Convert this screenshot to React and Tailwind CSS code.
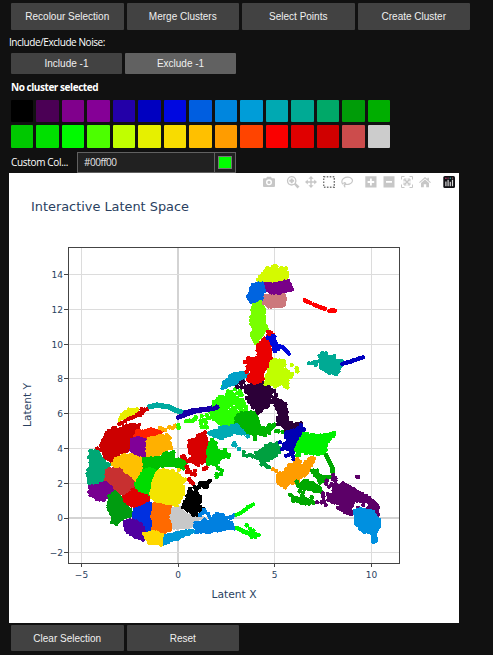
import React from 'react';

const swatches = [
  ['#000000', '#4b0055', '#80008c', '#850096', '#2300a8', '#0000c0', '#0008e0', '#005ee0', '#0086de', '#009dd8', '#00a9b2', '#00aa94', '#00a868', '#009c08', '#00ae00'],
  ['#00c800', '#00e000', '#00fa00', '#4cff00', '#c0ff00', '#e6f000', '#f8dc00', '#ffc000', '#ff9c00', '#ff4400', '#fa0000', '#e00000', '#d00000', '#cc4c4c', '#cccccc'],
];

// Each layer has its own origin; coordinates are in thirds of a pixel.
// kinds: s = solid region, c = loose cloud, l = streak, d = single points
const layers = [
  {
    origin: 'translate(60 390) scale(.33333)',
    marks: [
      ['s', '#e8ee00', '180,88 183,75 205,60 234,57 232,64 212,74 195,86'],
      ['d', '#d20000', '178,102 186,98 195,94 204,88 213,84 222,80 230,76 240,75 238,70 247,68 245,58 254,59 262,57'],
      ['l', '#00aaa0', '270,50 290,45 305,48 325,50 345,60 368,68', 16],
      ['d', '#2aff00', '378,94 388,92 398,92 404,88 407,82 422,92 423,100 435,90 437,98 425,78 440,75 428,110 440,112'],
      ['l', '#1800a8', '355,82 375,75 400,65 430,60 475,48', 14],
      ['s', '#cc0000', '132,195 125,165 140,126 165,115 175,122 200,106 238,106 228,125 220,140 210,152 205,182 180,188 165,203 150,212 135,205'],
      ['d', '#cc0000', '112,176 120,180 160,115'],
      ['s', '#ff2000', '230,122 250,125 275,116 288,122 307,123 300,135 260,145 226,140'],
      ['s', '#800098', '214,152 235,142 256,152 262,175 255,200 232,195 213,180'],
      ['s', '#ffb000', '264,147 300,137 325,138 331,172 310,187 290,197 262,198'],
      ['d', '#ffb000', '300,114 308,118 316,120 328,112 338,114 346,107 352,110 320,135'],
      ['s', '#00c000', '240,207 300,202 322,190 340,187 338,205 325,225 300,228 290,235 262,230 240,225'],
      ['s', '#00c000', '320,210 345,208 368,209 378,215 370,235 350,228 325,222'],
      ['d', '#2aff00', '355,105 356,113'],
      ['s', '#ffc000', '157,222 175,202 210,194 240,207 243,240 238,265 228,275 205,262 175,240'],
      ['s', '#00a875', '92,180 102,185 118,190 126,210 145,224 148,237 135,245 138,268 120,276 87,280 83,250 92,230 90,200'],
      ['s', '#c83030', '140,245 150,237 175,240 205,262 223,280 213,300 190,310 165,300 140,270'],
      ['s', '#780090', '89,290 140,280 158,300 146,315 131,332 110,326 91,315'],
      ['s', '#009c10', '165,305 185,325 211,360 213,375 180,390 167,401 156,398 157,375 144,355 150,320'],
      ['s', '#e00000', '190,322 225,297 268,317 260,335 225,350 207,343'],
      ['s', '#00dc00', '251,242 268,235 281,239 280,258 268,310 237,300 230,280'],
      ['s', '#f4e400', '290,247 320,240 350,250 362,262 375,270 362,285 372,300 365,322 350,340 325,343 290,336 274,320 277,280'],
      ['d', '#f4e400', '356,240 350,349'],
      ['s', '#0030e0', '222,362 268,338 282,347 278,380 276,418 262,422 245,400 222,383'],
      ['s', '#5000a0', '192,396 218,389 243,402 256,430 249,447 225,440 197,420'],
      ['s', '#ff6a00', '285,341 333,352 333,388 336,413 315,427 280,423 278,380'],
      ['s', '#0098d8', '310,437 345,432 370,424 400,422 370,438 345,448 308,462'],
      ['s', '#ffd800', '254,432 280,424 306,434 300,462 265,457'],
      ['s', '#c8c8c8', '340,357 360,353 380,375 410,383 403,403 385,413 342,411 335,385'],
      ['d', '#c8c8c8', '418,384 426,383 430,388 410,392'],
      ['s', '#000000', '370,353 380,330 388,310 407,304 419,322 419,336 405,368 385,363'],
      ['d', '#000000', '390,297 388,305 404,292 410,295 418,290 428,280 434,282 440,290 450,272 445,277 400,375 412,374 423,363 428,358 433,360'],
      ['s', '#d80000', '388,150 405,150 414,140 432,142 440,155 438,175 440,200 434,213 415,222 385,213 400,200 388,180'],
      ['d', '#d80000', '367,200 375,205 372,199 380,230 383,237 380,246 390,246 395,251 405,254 405,242 388,268 392,275 398,280 432,237 438,235 430,133 435,127'],
    ],
  },
  {
    origin: 'translate(200 360) scale(.33333)',
    marks: [
      ['c', '#2aff00', '25,150 45,120 80,95 105,85 125,95 130,125 148,150 135,165 105,180 85,200 55,190 35,175 20,180', 190],
      ['s', '#2aff00', '35,160 70,145 103,165 105,180 85,195 58,190'],
      ['s', '#2aff00', '75,115 98,105 130,125 118,133 85,127'],
      ['d', '#2aff00', '3,182 12,180 20,166 5,200 15,201 70,80 105,88 60,120'],
      ['l', '#1800a8', '-45,158 -15,150 10,149 38,147 52,142', 14],
      ['s', '#00b400', '108,175 125,160 145,157 170,160 173,195 193,207 220,194 222,200 205,217 178,222 148,222 132,205 108,195'],
      ['d', '#00b400', '165,237 165,230 207,196 228,214 235,214 248,216 195,225'],
      ['c', '#00aab4', '22,215 45,208 75,197 110,195 130,210 148,225 100,220 75,235 35,232', 100],
      ['s', '#00aab4', '43,214 75,208 105,207 93,222 75,228 45,230'],
      ['d', '#00aab4', '103,250 106,256 117,267 143,229 100,255'],
      ['s', '#d80000', '-8,225 10,220 20,240 20,270 20,300 5,300 -8,290'],
      ['s', '#00d200', '25,262 35,242 45,252 50,275 65,278 78,285 60,297 50,315 38,310 25,313'],
      ['d', '#00d200', '70,275 79,282 88,285 85,291 68,290 55,325 65,332 63,342 50,350 50,343 75,270'],
      ['d', '#d80000', '15,325 19,323'],
      ['d', '#000000', '0,370 8,376 15,382 13,370 22,368 30,362 0,410 -3,427 0,440 12,448'],
      ['c', '#0080e0', '-20,490 0,478 18,478 20,460 60,462 98,465 95,505 70,506 45,518 -10,520', 125],
      ['s', '#0080e0', '-15,498 20,502 45,472 60,467 70,485 87,490 75,505 45,512 -10,516'],
      ['d', '#0080e0', '0,465 8,458 12,450 15,456 102,466 95,472 103,505'],
      ['l', '#00fa00', '109,465 130,453 145,442 160,433', 11],
      ['l', '#00fa00', '111,504 130,514 155,523 175,525', 14],
      ['d', '#00fa00', '140,496 150,506 160,512 155,530 166,530'],
      ['s', '#00a0c8', '66,82 80,61 105,40 138,36 135,47 118,67 80,80'],
      ['s', '#2c0038', '135,80 190,68 207,80 212,105 208,130 190,145 177,157 162,140 140,115 152,103 138,95'],
      ['s', '#2c0038', '220,112 240,122 258,137 260,165 262,188 288,197 294,193 268,207 255,206 245,195 233,191 238,165 231,145 221,125'],
      ['d', '#2c0038', '112,80 122,70 130,65 125,82 195,68 215,90 223,93 228,105 303,190 258,213'],
      ['s', '#ea0000', '143,-5 215,-5 195,20 185,45 190,58 165,70 155,65 142,60 155,35 145,12'],
      ['d', '#ea0000', '135,5 143,20 140,35'],
      ['s', '#c0ff00', '208,5 245,0 248,25 270,42 262,60 260,80 245,72 225,78 207,70 195,70 205,40'],
      ['d', '#c0ff00', '275,15 290,25 292,34 272,50 276,42 262,82'],
      ['s', '#00a040', '170,280 190,270 200,255 230,252 238,265 235,278 205,300 185,303 174,290'],
      ['d', '#00a040', '131,276 132,286 141,287 150,285 158,289 165,290 172,294 185,313 194,312 200,319 207,322 232,250'],
      ['s', '#0000b4', '260,215 290,210 301,197 311,207 308,224 292,240 288,265 278,285 270,270 250,265 250,252 270,248 258,232'],
      ['d', '#0000b4', '240,247 246,268 258,287 266,285 281,298 279,290 302,195'],
      ['s', '#00f000', '288,270 308,228 330,225 370,227 385,225 403,218 404,225 382,243 376,256 374,280 340,282 310,276'],
      ['d', '#00f000', '291,286 297,285 312,221 322,222'],
      ['s', '#ff9c00', '232,345 255,335 268,315 295,310 305,318 335,293 340,298 322,340 297,356 290,370 268,368 253,380 236,370'],
      ['d', '#ff9c00', '219,328 229,333 292,298 299,305'],
      ['l', '#00a800', '378,285 388,305 397,322 398,338', 13],
      ['s', '#00a800', '334,330 350,332 360,350 395,350 380,358 363,368 350,352'],
      ['s', '#00a800', '292,378 315,362 340,370 360,385 370,400 340,390 308,385'],
      ['s', '#00a800', '275,410 300,415 325,417 325,430 300,426 280,420'],
      ['d', '#00a800', '270,404 299,394 308,399 307,407 335,412 332,422 340,428 290,365'],
      ['s', '#5c0068', '402,375 420,378 428,368 465,389 505,412 532,435 533,462 515,445 502,420 490,425 465,420 450,447 425,440 420,425 395,427 385,405 398,402'],
      ['s', '#5c0068', '415,445 435,445 465,460 440,460'],
      ['d', '#5c0068', '400,345 406,355 398,357 406,362 380,362 378,371 387,380 395,373 369,400 370,410 365,427 371,424 377,435 351,427 385,420 471,350 474,351 490,435 505,445 520,465 474,444'],
      ['s', '#0090e0', '465,450 485,448 510,452 525,464 527,472 537,477 537,500 528,518 528,545 521,546 514,518 488,511 468,490'],
    ],
  },
  {
    origin: 'translate(200 240) scale(.33333)',
    marks: [
      ['s', '#d4fa00', '176,120 187,100 207,87 257,87 262,108 260,121 200,122'],
      ['d', '#d4fa00', '219,80 224,78 229,80 202,85 245,84'],
      ['s', '#cc787c', '190,170 253,165 254,195 245,200 220,196 205,199 190,186'],
      ['s', '#780088', '196,134 237,130 264,124 273,151 240,158 215,158 197,150'],
      ['s', '#0064e0', '160,134 188,129 190,155 183,181 154,184 145,168'],
      ['s', '#78ff00', '161,192 180,192 194,208 190,228 197,263 188,286 173,300 165,311 159,295 160,270 154,240'],
      ['d', '#78ff00', '155,285 200,268 181,186'],
      ['s', '#ea0000', '172,318 195,294 208,310 209,335 205,365 198,385 150,385 152,369 178,352'],
      ['d', '#ea0000', '204,275 212,278 218,284 205,287 135,366 142,367 192,298'],
      ['s', '#0008dc', '207,292 222,292 229,310 232,328 222,335 218,312'],
      ['l', '#0008dc', '230,318 247,322 258,332 266,341', 13],
      ['d', '#0008dc', '203,293 218,288'],
      ['d', '#c0ff00', '218,370 224,370 252,364 253,374 242,376'],
      ['l', '#ff0000', '315,182 330,188', 13],
      ['l', '#ff0000', '341,194 354,199 374,206', 13],
      ['l', '#ff0000', '389,212 405,212', 13],
      ['s', '#00aa94', '360,345 375,340 382,348 380,365 395,355 405,362 426,360 433,370 422,380 410,400 380,396 362,384'],
      ['d', '#00aa94', '327,370 337,369 345,366 347,374 357,364 403,348 367,339 378,340 390,350'],
      ['l', '#0000c0', '427,372 450,365 470,358 490,352', 12],
    ],
  },
];

const makeRandom = (seed) => () => {
  seed = (seed * 1664525 + 1013904223) % 4294967296;
  return seed / 4294967296;
};

function inside(x, y, pts) {
  let hit = false;
  for (let i = 0, j = pts.length - 1; i < pts.length; j = i++) {
    const [xi, yi] = pts[i];
    const [xj, yj] = pts[j];
    if (yi > y !== yj > y && x < ((xj - xi) * (y - yi)) / (yj - yi) + xi) hit = !hit;
  }
  return hit;
}

function alongPath(pts, closed, step, jitter, rnd) {
  const out = [];
  const n = closed ? pts.length : pts.length - 1;
  for (let i = 0; i < n; i++) {
    const [x1, y1] = pts[i];
    const [x2, y2] = pts[(i + 1) % pts.length];
    const k = Math.max(1, Math.round(Math.hypot(x2 - x1, y2 - y1) / step));
    for (let t = 0; t < k; t++) {
      out.push([
        x1 + ((x2 - x1) * t) / k + (rnd() - 0.5) * jitter,
        y1 + ((y2 - y1) * t) / k + (rnd() - 0.5) * jitter,
      ]);
    }
  }
  return out;
}

function Cluster({ mark, seed }) {
  const [kind, color, coords, amount] = mark;
  const pts = coords.split(' ').map((p) => p.split(',').map(Number));
  const rnd = makeRandom(seed * 7919 + 13);
  let dots = pts;
  let r = 6.9;
  if (kind === 's') {
    dots = alongPath(pts, true, 9, 6, rnd);
    r = 6.2;
  } else if (kind === 'l') {
    dots = alongPath(pts, false, 7, 3, rnd);
    r = 6.2;
  } else if (kind === 'c') {
    const xs = pts.map((p) => p[0]);
    const ys = pts.map((p) => p[1]);
    const x0 = Math.min(...xs), x1 = Math.max(...xs), y0 = Math.min(...ys), y1 = Math.max(...ys);
    dots = [];
    while (dots.length < amount) {
      const x = x0 + rnd() * (x1 - x0);
      const y = y0 + rnd() * (y1 - y0);
      if (inside(x, y, pts)) dots.push([x, y]);
    }
    r = 6.2;
  }
  return (
    <g fill={color}>
      {kind === 's' && <polygon points={coords} stroke={color} strokeWidth="8" strokeLinejoin="round" />}
      {kind === 'l' && <polyline points={coords} fill="none" stroke={color} strokeWidth={amount} strokeLinecap="round" strokeLinejoin="round" />}
      {dots.map(([x, y], i) => <circle key={i} cx={x} cy={y} r={r} />)}
    </g>
  );
}

const xTicks = [['−5', 81.5], ['0', 178], ['5', 274.5], ['10', 371.5]];
const yTicks = [['14', 274.5], ['12', 309.5], ['10', 344.5], ['8', 378.5], ['6', 413.5], ['4', 448.5], ['2', 483.5], ['0', 518], ['−2', 552.5]];

function ModeBar() {
  return (
    <g fill="#c7c7c7" stroke="none">
      <path fillRule="evenodd" d="M263 179.3q0-1 1-1h2.2l.8-1.5h4l.8 1.5h2.2q1 0 1 1v6.7q0 1-1 1h-10q-1 0-1-1zM269 179.3a3 3 0 1 0 0 6 3 3 0 0 0 0-6zm0 1.4a1.6 1.6 0 1 1 0 3.2 1.6 1.6 0 0 1 0-3.2z" />
      <path fillRule="evenodd" d="M291.7 176a4.8 4.8 0 1 0 2.6 8.8l3.2 3.6 2-2-3.6-3.2a4.8 4.8 0 0 0-4.2-7.2zm0 1.3a3.5 3.5 0 1 1 0 7 3.5 3.5 0 0 1 0-7zm-1 1.1v1.4h-1.4v2h1.4v1.4h2v-1.4h1.4v-2h-1.4v-1.4z" />
      <path d="M311 176l2.6 2.8h-1.9v2.5h2.5v-1.9l2.8 2.6-2.8 2.6v-1.9h-2.5v2.5h1.9L311 188l-2.6-2.8h1.9v-2.5h-2.5v1.9L305 182l2.8-2.6v1.9h2.5v-2.5h-1.9z" />
      <rect x="323.7" y="176.7" width="10.6" height="10.6" fill="none" stroke="#777" strokeWidth="1.4" strokeDasharray="1.6 1.4" />
      <path d="M343 184.3c-2-2-1.3-4.6.8-6 2.4-1.7 6-1.5 7.8.3 2 2 .5 4.6-2.3 5.5-2 .6-3.8.5-5-.2-.9-.6-.2-1.5.8-1.2 1.4.5.5 2.4-.6 2.4-1 .3.4 1.1.5 2.3" fill="none" stroke="#c7c7c7" strokeWidth="1.2" />
      <path fillRule="evenodd" d="M365.3 176.3h11.2v11.2h-11.2zM370 178.6v2.4h-2.4v2h2.4v2.4h1.8V183h2.4v-2h-2.4v-2.4z" />
      <path fillRule="evenodd" d="M383.5 176.3h11v11.2h-11zM386 181v1.8h6V181z" />
      <g fill="none" stroke="#c7c7c7" strokeWidth="1">
        <path d="M401.5 179.5v-3h3M409.5 176.5h3v3M412.5 184.5v3h-3M404.5 187.5h-3v-3" />
        <path d="M404.5 179.5l5 5M409.5 179.5l-5 5" strokeWidth="1.5" />
        <path d="M404 181.5V179h2.5M407.5 179h2.5v2.5M410 182.5v2.5h-2.5M406.5 185H404v-2.5" />
      </g>
      <path d="M425 177l2.4 2.1v-1.4h1.5v2.8l2 1.7-.7.7-5.2-4.5-5.2 4.5-.7-.7zM425 179.5l4 3.5v4.2h-2.8v-2.9h-2.4v2.9H421V183z" />
      <rect x="443.3" y="176" width="11.7" height="12" rx="1.5" fill="#101014" />
      <g fill="#d8d8d8">
        <rect x="445.3" y="181.5" width="1.2" height="4.7" />
        <rect x="447.5" y="179.8" width="1.2" height="6.4" />
        <rect x="449.7" y="181.8" width="1.2" height="4.4" />
        <rect x="451.9" y="179.8" width="1.2" height="6.4" />
        <circle cx="445.9" cy="178.3" r=".8" fill="#e0487a" />
        <circle cx="448.1" cy="178.1" r=".7" fill="#c0507a" />
        <circle cx="450.3" cy="178.3" r=".8" fill="#39a9a9" />
        <circle cx="452.5" cy="178.1" r=".7" fill="#a77" />
      </g>
    </g>
  );
}

function LatentPlot() {
  return (
    <svg viewBox="9 173 450 450" className="ml-[9px] block h-[450px] w-[450px] bg-white font-['DejaVu_Sans',Verdana,sans-serif]" fill="#2a3f5f">
      <text x="31" y="211" fontSize="13" textLength="158" lengthAdjust="spacingAndGlyphs">Interactive Latent Space</text>
      <ModeBar />
      <g shapeRendering="crispEdges">
        {xTicks.map(([t, x]) => (
          <path key={t} d={`M${x} 248V563`} stroke={t === '0' ? '#d3d3d3' : '#dcdcdc'} strokeWidth={t === '0' ? 2 : 1} />
        ))}
        {yTicks.map(([t, y]) => (
          <path key={t} d={`M69 ${y}H399`} stroke={t === '0' ? '#d3d3d3' : '#dcdcdc'} strokeWidth={t === '0' ? 2 : 1} />
        ))}
        {xTicks.map(([t, x]) => <path key={t} d={`M${Math.floor(x) + 0.5} 564v3`} stroke="#444" />)}
        {yTicks.map(([t, y]) => <path key={t} d={`M64 ${Math.floor(y) + 0.5}h4`} stroke="#444" />)}
      </g>
      {layers.map((layer, i) => (
        <g key={i} transform={layer.origin} shapeRendering="crispEdges">
          {layer.marks.map((m, j) => <Cluster key={j} mark={m} seed={i * 100 + j + 1} />)}
        </g>
      ))}
      <rect x="68.5" y="247.5" width="331" height="316" fill="none" stroke="#444" shapeRendering="crispEdges" />
      <g fontSize="9">
        {xTicks.map(([t, x]) => <text key={t} x={x} y="578" textAnchor="middle">{t}</text>)}
        {yTicks.map(([t, y]) => <text key={t} x="63" y={y + 3.3} textAnchor="end">{t}</text>)}
      </g>
      <text x="211.5" y="598" fontSize="10.5" textLength="45" lengthAdjust="spacingAndGlyphs">Latent X</text>
      <text transform="translate(31 427) rotate(-90)" fontSize="10.5" textLength="44" lengthAdjust="spacingAndGlyphs">Latent Y</text>
    </svg>
  );
}

function Button({ children, className = 'bg-[#424242]' }) {
  return (
    <button className={`rounded-[1px] text-center font-['Liberation_Sans',Arial,sans-serif] text-[10px] text-[#f0f0f0] ${className}`}>
      {children}
    </button>
  );
}

export default function App() {
  return (
    <main className="h-[655px] w-[493px] overflow-hidden bg-[#111111] pt-[3px] font-['Open_Sans','Noto_Sans',sans-serif] text-[10px] text-white">
      <div className="ml-[11px] grid h-[27px] w-[459px] grid-cols-4 gap-[3px]">
        <Button>Recolour Selection</Button>
        <Button>Merge Clusters</Button>
        <Button>Select Points</Button>
        <Button>Create Cluster</Button>
      </div>
      <div className="ml-[9px] flex h-[23px] items-center pt-[2px]">
        <span className="whitespace-nowrap tracking-[-0.43px]">Include/Exclude Noise:</span>
      </div>
      <div className="ml-[11px] grid h-[21px] w-[225px] grid-cols-2 gap-[3px]">
        <Button>Include -1</Button>
        <Button className="bg-[#616161]">Exclude -1</Button>
      </div>
      <div className="ml-[11px] flex h-[26px] items-center font-bold tracking-[-0.45px]">No cluster selected</div>
      <div className="ml-[11px] grid h-[48px] w-[379px] grid-rows-[22px_23px] gap-[3px]">
        {swatches.map((row, i) => (
          <div key={i} className="grid grid-cols-[repeat(15,minmax(0,1fr))] gap-[3px]">
            {row.map((c) => <div key={c} className="rounded-[1px]" style={{ backgroundColor: c }} />)}
          </div>
        ))}
      </div>
      <div className="ml-[11px] mt-[4px] flex h-[21px] items-center">
        <span className="w-[66px] tracking-[-0.33px]">Custom Col...</span>
        <div className="flex h-[21px] w-[138px] items-center border border-[#616161] bg-[#212121] pl-[6px] text-[#e4e4e4] tracking-[-0.5px]">#00ff00</div>
        <div className="flex h-[21px] w-[21px] items-center justify-center border border-l-0 border-[#616161] bg-[#212121]">
          <div className="h-[13px] w-[14px] border border-[#777777] bg-[#00ff00]" />
        </div>
      </div>
      <LatentPlot />
      <div className="ml-[11px] mt-[2px] grid h-[26px] w-[228px] grid-cols-2 gap-[3px]">
        <Button>Clear Selection</Button>
        <Button>Reset</Button>
      </div>
    </main>
  );
}
